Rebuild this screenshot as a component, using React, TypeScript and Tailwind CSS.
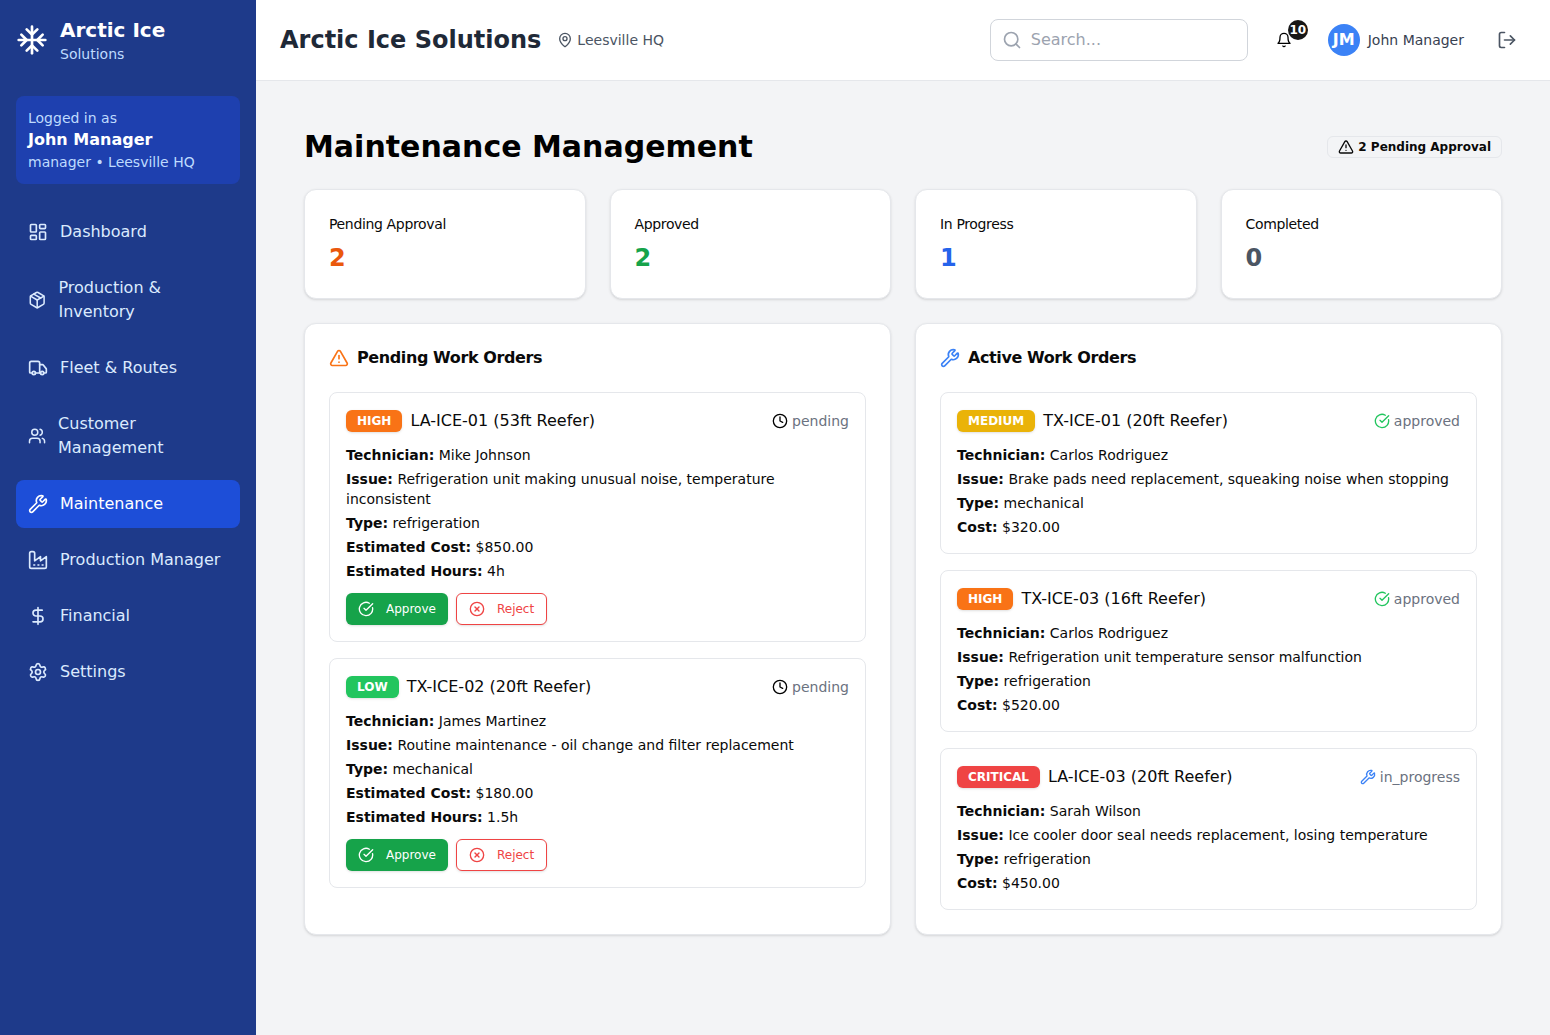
import React from "react";
import {
  LayoutDashboard, Package, Truck, Users, Wrench, DollarSign, Settings,
  MapPin, Search, LogOut, TriangleAlert, CircleCheckBig, Clock, CircleX,
} from "lucide-react";

type IconProps = { className?: string };

function Glyph({ className, children }: IconProps & { children: React.ReactNode }) {
  return (
    <svg
      xmlns="http://www.w3.org/2000/svg"
      width="24"
      height="24"
      viewBox="0 0 24 24"
      fill="none"
      stroke="currentColor"
      strokeWidth="2"
      strokeLinecap="round"
      strokeLinejoin="round"
      className={className}
    >
      {children}
    </svg>
  );
}

function Snowflake({ className }: IconProps) {
  return (
    <Glyph className={className}>
      <line x1="2" x2="22" y1="12" y2="12" />
      <line x1="12" x2="12" y1="2" y2="22" />
      <path d="m20 16-4-4 4-4" />
      <path d="m4 8 4 4-4 4" />
      <path d="m16 4-4 4-4-4" />
      <path d="m8 20 4-4 4 4" />
    </Glyph>
  );
}

function Factory({ className }: IconProps) {
  return (
    <Glyph className={className}>
      <path d="M2 20a2 2 0 0 0 2 2h16a2 2 0 0 0 2-2V8l-7 5V8l-7 5V4a2 2 0 0 0-2-2H4a2 2 0 0 0-2 2Z" />
      <path d="M17 18h1" />
      <path d="M12 18h1" />
      <path d="M7 18h1" />
    </Glyph>
  );
}

function Bell({ className }: IconProps) {
  return (
    <Glyph className={className}>
      <path d="M6 8a6 6 0 0 1 12 0c0 7 3 9 3 9H3s3-2 3-9" />
      <path d="M10.3 21a1.94 1.94 0 0 0 3.4 0" />
    </Glyph>
  );
}

const nav = [
  { label: "Dashboard", Icon: LayoutDashboard },
  { label: "Production & Inventory", Icon: Package },
  { label: "Fleet & Routes", Icon: Truck },
  { label: "Customer Management", Icon: Users },
  { label: "Maintenance", Icon: Wrench, active: true },
  { label: "Production Manager", Icon: Factory },
  { label: "Financial", Icon: DollarSign },
  { label: "Settings", Icon: Settings },
];

const stats = [
  { label: "Pending Approval", value: "2", color: "text-[#ea580c]" },
  { label: "Approved", value: "2", color: "text-[#16a34a]" },
  { label: "In Progress", value: "1", color: "text-[#2563eb]" },
  { label: "Completed", value: "0", color: "text-[#4b5563]" },
];

function Line({ k, v }: { k: string; v: string }) {
  return (
    <p>
      <span className="font-bold">{k}</span> {v}
    </p>
  );
}

function Priority({ label, color }: { label: string; color: string }) {
  return (
    <span className={`inline-flex items-center rounded-md border border-transparent px-2.5 py-0.5 text-xs font-semibold text-white shadow-sm ${color}`}>
      {label}
    </span>
  );
}

type Order = {
  pr: string;
  color: string;
  truck: string;
  status: "pending" | "approved" | "in_progress";
  lines: [string, string][];
};

const pending: Order[] = [
  {
    pr: "HIGH", color: "bg-[#f97316]", truck: "LA-ICE-01 (53ft Reefer)", status: "pending",
    lines: [
      ["Technician:", "Mike Johnson"],
      ["Issue:", "Refrigeration unit making unusual noise, temperature inconsistent"],
      ["Type:", "refrigeration"],
      ["Estimated Cost:", "$850.00"],
      ["Estimated Hours:", "4h"],
    ],
  },
  {
    pr: "LOW", color: "bg-[#22c55e]", truck: "TX-ICE-02 (20ft Reefer)", status: "pending",
    lines: [
      ["Technician:", "James Martinez"],
      ["Issue:", "Routine maintenance - oil change and filter replacement"],
      ["Type:", "mechanical"],
      ["Estimated Cost:", "$180.00"],
      ["Estimated Hours:", "1.5h"],
    ],
  },
];

const active: Order[] = [
  {
    pr: "MEDIUM", color: "bg-[#eab308]", truck: "TX-ICE-01 (20ft Reefer)", status: "approved",
    lines: [
      ["Technician:", "Carlos Rodriguez"],
      ["Issue:", "Brake pads need replacement, squeaking noise when stopping"],
      ["Type:", "mechanical"],
      ["Cost:", "$320.00"],
    ],
  },
  {
    pr: "HIGH", color: "bg-[#f97316]", truck: "TX-ICE-03 (16ft Reefer)", status: "approved",
    lines: [
      ["Technician:", "Carlos Rodriguez"],
      ["Issue:", "Refrigeration unit temperature sensor malfunction"],
      ["Type:", "refrigeration"],
      ["Cost:", "$520.00"],
    ],
  },
  {
    pr: "CRITICAL", color: "bg-[#ef4444]", truck: "LA-ICE-03 (20ft Reefer)", status: "in_progress",
    lines: [
      ["Technician:", "Sarah Wilson"],
      ["Issue:", "Ice cooler door seal needs replacement, losing temperature"],
      ["Type:", "refrigeration"],
      ["Cost:", "$450.00"],
    ],
  },
];

function StatusIcon({ s }: { s: Order["status"] }) {
  if (s === "pending") return <Clock className="w-4 h-4 text-black" />;
  if (s === "approved") return <CircleCheckBig className="w-4 h-4 text-[#22c55e]" />;
  return <Wrench className="w-4 h-4 text-[#3b82f6]" />;
}

function OrderCard({ o, actions }: { o: Order; actions?: boolean }) {
  return (
    <div className="rounded-lg border border-[#e5e7eb] p-4">
      <div className="mb-3 flex items-center justify-between">
        <div className="flex items-center gap-2">
          <Priority label={o.pr} color={o.color} />
          <span className="text-base">{o.truck}</span>
        </div>
        <div className="flex items-center gap-1 text-sm text-[#6b7280]">
          <StatusIcon s={o.status} />
          <span>{o.status}</span>
        </div>
      </div>
      <div className="flex flex-col gap-1 text-sm">
        {o.lines.map(([k, v]) => (
          <Line key={k} k={k} v={v} />
        ))}
      </div>
      {actions && (
        <div className="mt-3 flex gap-2">
          <button className="flex h-8 items-center gap-3 rounded-md bg-[#16a34a] px-3 text-xs font-medium text-white shadow-sm">
            <CircleCheckBig className="w-4 h-4" />
            Approve
          </button>
          <button className="flex h-8 items-center gap-3 rounded-md border border-[#ef4444] bg-white px-3 text-xs font-medium text-[#ef4444] shadow-sm">
            <CircleX className="w-4 h-4" />
            Reject
          </button>
        </div>
      )}
    </div>
  );
}

export default function App() {
  return (
    <div className="flex min-h-screen bg-[#f3f4f6] font-['DejaVu_Sans',sans-serif] text-[#0a0a0a]">
      <aside className="w-64 shrink-0 bg-[#1e3a8a] p-4 text-white">
        <div className="mb-8 flex items-center gap-3">
          <Snowflake className="w-8 h-8" />
          <div>
            <div className="text-xl font-bold">Arctic Ice</div>
            <div className="text-sm text-[#bfdbfe]">Solutions</div>
          </div>
        </div>
        <div className="mb-6 rounded-lg bg-[#1e40af] p-3">
          <div className="text-sm text-[#bfdbfe]">Logged in as</div>
          <div className="font-semibold">John Manager</div>
          <div className="text-sm text-[#bfdbfe]">manager • Leesville HQ</div>
        </div>
        <nav className="flex flex-col gap-2">
          {nav.map(({ label, Icon, active }) => (
            <a
              key={label}
              className={`flex items-center gap-3 rounded-lg px-3 py-3 ${active ? "bg-[#1d4ed8] text-white" : "text-[#dbeafe]"}`}
            >
              <Icon className="w-5 h-5" />
              <span>{label}</span>
            </a>
          ))}
        </nav>
      </aside>
      <div className="flex min-w-0 flex-1 flex-col">
        <header className="flex h-[81px] items-center justify-between border-b border-[#e5e7eb] bg-white px-6">
          <div className="flex items-center gap-4">
            <h1 className="text-2xl font-bold text-[#1f2937]">Arctic Ice Solutions</h1>
            <div className="flex items-center gap-1 text-sm text-[#4b5563]">
              <MapPin className="w-4 h-4" />
              <span>Leesville HQ</span>
            </div>
          </div>
          <div className="flex items-center gap-6">
            <div className="flex items-center gap-4">
              <div className="relative">
                <Search className="absolute left-3 top-1/2 w-5 h-5 -translate-y-1/2 text-[#9ca3af]" />
                <input
                  placeholder="Search..."
                  className="w-[258px] rounded-lg border border-[#d1d5db] py-2 pl-10 pr-4 text-base outline-none placeholder:text-[#9ca3af]"
                />
              </div>
              <div className="relative flex h-10 w-10 items-center justify-center">
                <Bell className="w-4 h-4 text-black" />
                <span className="absolute right-[-4px] top-0 flex h-5 w-5 items-center justify-center rounded-full bg-[#171717] text-xs font-bold text-white">
                  10
                </span>
              </div>
            </div>
            <div className="flex items-center gap-2">
              <div className="flex h-8 w-8 items-center justify-center rounded-full bg-[#3b82f6] font-semibold text-white">JM</div>
              <span className="text-sm text-[#374151]">John Manager</span>
            </div>
            <div className="flex h-10 w-[38px] items-center justify-center text-[#4b5563]">
              <LogOut className="w-5 h-5" />
            </div>
          </div>
        </header>
        <main className="flex-1 p-12">
          <div className="mb-6 flex items-center justify-between">
            <h2 className="text-3xl font-bold text-black">Maintenance Management</h2>
            <span className="inline-flex items-center gap-1 rounded-md border border-[#e5e7eb] px-2.5 py-0.5 text-xs font-semibold">
              <TriangleAlert className="w-4 h-4" />
              2 Pending Approval
            </span>
          </div>
          <div className="mb-6 grid grid-cols-4 gap-6">
            {stats.map((s) => (
              <div key={s.label} className="rounded-xl border border-[#e5e7eb] bg-white p-6 shadow-sm">
                <div className="text-sm tracking-tight">{s.label}</div>
                <div className={`mt-2 text-2xl font-bold ${s.color}`}>{s.value}</div>
              </div>
            ))}
          </div>
          <div className="grid grid-cols-2 gap-6">
            <section className="rounded-xl border border-[#e5e7eb] bg-white p-6 shadow-sm">
              <div className="mb-6 flex items-center gap-2">
                <TriangleAlert className="w-5 h-5 text-[#f97316]" />
                <h3 className="font-semibold leading-none tracking-tight">Pending Work Orders</h3>
              </div>
              <div className="flex flex-col gap-4">
                {pending.map((o) => (
                  <OrderCard key={o.truck} o={o} actions />
                ))}
              </div>
            </section>
            <section className="rounded-xl border border-[#e5e7eb] bg-white p-6 shadow-sm">
              <div className="mb-6 flex items-center gap-2">
                <Wrench className="w-5 h-5 text-[#3b82f6]" />
                <h3 className="font-semibold leading-none tracking-tight">Active Work Orders</h3>
              </div>
              <div className="flex flex-col gap-4">
                {active.map((o) => (
                  <OrderCard key={o.truck} o={o} />
                ))}
              </div>
            </section>
          </div>
        </main>
      </div>
    </div>
  );
}
